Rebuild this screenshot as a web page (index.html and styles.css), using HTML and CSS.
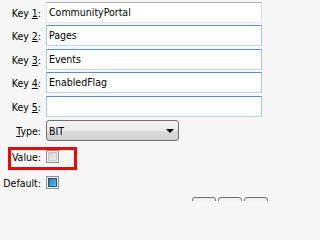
FILE: index.html
```html
<!DOCTYPE html>
<html>
<head>
<meta charset="utf-8">
<link rel="stylesheet" href="styles.css">
</head>
<body>
<div class="form">
  <div class="row r1"><label class="lbl">Key <u>1</u>:</label><div class="tb idle">CommunityPortal</div></div>
  <div class="row r2"><label class="lbl">Key <u>2</u>:</label><div class="tb">Pages</div></div>
  <div class="row r3"><label class="lbl">Key <u>3</u>:</label><div class="tb">Events</div></div>
  <div class="row r4"><label class="lbl">Key <u>4</u>:</label><div class="tb">EnabledFlag</div></div>
  <div class="row r5"><label class="lbl">Key <u>5</u>:</label><div class="tb"></div></div>
  <div class="row r6"><label class="lbl"><u>T</u>ype:</label><div class="sel"><span>BIT</span><span class="arrow"></span></div></div>
  <div class="row r7"><label class="lbl">Value:</label><span class="cb"></span></div>
  <div class="row r8"><label class="lbl">Default:</label><span class="cb on"><span class="fill"></span></span></div>
  <div class="buttons"><span class="btn"></span><span class="btn"></span><span class="btn"></span></div>
</div>
<div class="mark"></div>
</body>
</html>
```

FILE: styles.css
```css
html, body { margin: 0; padding: 0; }
body {
  background: #f6f6f6;
  font-family: "DejaVu Sans Condensed", "DejaVu Sans", sans-serif;
  font-size: 10.5px;
  color: #000;
  width: 270px;
  height: 201px;
  overflow: hidden;
  position: relative;
}
.form { padding: 2px 8px 0 3px; display: flex; flex-direction: column; }
.row { display: flex; align-items: center; gap: 5px; }
.lbl { width: 38px; flex: none; text-align: right; white-space: nowrap; }
.lbl u { text-decoration-thickness: 1px; text-underline-offset: 1px; }
.r2, .r4 { margin-top: 2px; }
.r3, .r5, .r6 { margin-top: 3px; }
.tb {
  box-sizing: border-box;
  width: 216px; height: 21px;
  background: #fff;
  border: 1px solid #b7d9ed;
  border-top-color: #5b92bf;
  border-left-color: #a4c9e3;
  border-right-color: #a4c9e3;
  padding: 0 2px;
  line-height: 19px;
}
.tb.idle {
  border-color: #e3e9ef;
  border-top-color: #abadb3;
  border-left-color: #e2e3ea;
  border-right-color: #dbdfe6;
}
.sel {
  box-sizing: border-box;
  width: 133px; height: 21px;
  border: 1px solid #707070;
  border-radius: 3px;
  background: linear-gradient(#f2f2f2 0%, #ebebeb 50%, #dddddd 51%, #cfcfcf 100%);
  display: flex; align-items: center; justify-content: space-between;
  padding: 0 4px 0 2px;
}
.arrow {
  width: 0; height: 0;
  border-left: 4px solid transparent;
  border-right: 4px solid transparent;
  border-top: 4px solid #000;
}
.r7 { margin-top: 9px; height: 13px; }
.r8 { margin-top: 13px; height: 13px; }
.cb {
  box-sizing: border-box;
  width: 13px; height: 13px; flex: none;
  border: 1px solid #8f8f8f;
  box-shadow: inset 0 0 0 1px #f4f4f4, inset 0 0 0 2px #c8c8c8;
  background-image: linear-gradient(135deg, #c9c9c9, #f6f6f6);
  padding: 2px;
}
.cb.on { background: #f4f4f4; box-shadow: none; border-color: #8f8f8f; }
.fill {
  display: block;
  border: 1px solid #1c5180;
  background: linear-gradient(135deg, #2b7fbf, #5fb8e8);
  margin: -1px;
  width: 9px; height: 9px; box-sizing: border-box;
}
.buttons { margin-top: 8px; display: flex; justify-content: flex-end; gap: 2px; margin-right: -6px; }
.btn {
  box-sizing: border-box;
  width: 24px; height: 23px;
  border: 1px solid #707070;
  border-radius: 3px;
  background: linear-gradient(#f2f2f2, #ebebeb);
}
.mark {
  position: absolute;
  left: 8px; top: 147px;
  width: 69px; height: 23px;
  box-sizing: border-box;
  border: 3px solid #ff0000;
}
```
